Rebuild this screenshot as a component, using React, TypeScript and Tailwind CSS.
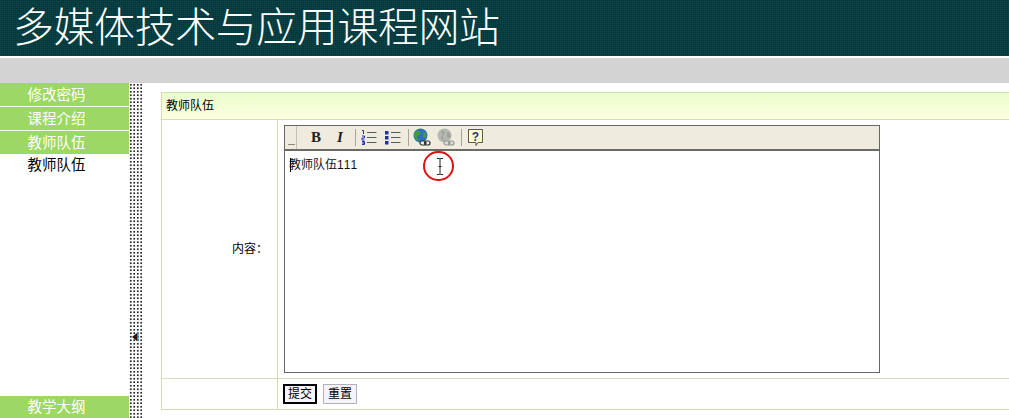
import React from "react";

const font = "font-['Liberation_Sans','Noto_Sans_CJK_SC',sans-serif]";

function Nav({ label }: { label: string }) {
  return (
    <div className="h-[24px] flex items-center justify-center pr-[16px] pt-[2px] text-[14.5px] leading-none text-white bg-[#9dd764] border-b border-b-white">
      {label}
    </div>
  );
}

function Sep() {
  return <div className="w-px h-[17px] bg-[#a8a595] ml-[3px] mr-[1px]" />;
}

function Btn({ children }: { children: React.ReactNode }) {
  return <div className="w-[24px] h-full flex items-center justify-center">{children}</div>;
}

export default function App() {
  return (
    <div className={`w-[1009px] h-[418px] overflow-hidden bg-white flex flex-col ${font}`}>
      <div className="h-[56px] shrink-0 bg-[#0a4144] bg-[conic-gradient(#023034_25%,transparent_0)] bg-[length:2px_2px] pl-[13px] flex items-center">
        <span className="text-white text-[41px] leading-none font-light font-['Liberation_Serif','Noto_Sans_CJK_SC',serif] tracking-[-0.45px]">多媒体技术与应用课程网站</span>
      </div>
      <div className="h-[2px] shrink-0 bg-white" />
      <div className="h-[25px] shrink-0 bg-[#d3d3d3]" />
      <div className="flex flex-1 min-h-0">
        <div className="w-[129px] shrink-0 flex flex-col">
          <Nav label="修改密码" />
          <Nav label="课程介绍" />
          <Nav label="教师队伍" />
          <div className="h-[20px] flex items-center justify-center pr-[16px] text-[14.5px] leading-none text-black bg-white">教师队伍</div>
          <div className="flex-1" />
          <div className="h-[22px] flex items-center justify-center pr-[16px] text-[14.5px] leading-none text-white bg-[#9dd764]">教学大纲</div>
        </div>
        <div className="relative w-[13px] shrink-0 bg-[radial-gradient(circle,#000_0.55px,transparent_1px)] bg-[length:3.5px_3.5px]">
          <svg className="absolute left-[3px] top-[250px]" width="7" height="8" viewBox="0 0 7 8">
            <path d="M5 0 L0 4 L5 8 Z" fill="#2a1408" />
            <rect x="5" y="0" width="1.5" height="8" fill="#3a7fb0" />
          </svg>
        </div>
        <div className="flex-1 min-w-0 pl-[19px] pt-[9px]">
          <div className="w-[900px] h-[318px] flex flex-col border border-[#d6dcb4] border-r-0 text-[12px] text-black">
            <div className="h-[27px] shrink-0 flex items-center pl-[4px] border-b border-[#d6dcb4] bg-gradient-to-b from-[#e9fdcb] to-[#fffee0]">教师队伍</div>
            <div className="flex-1 min-h-0 flex border-b border-[#d6dcb4]">
              <div className="w-[116px] shrink-0 border-r border-[#d6dcb4] flex items-center justify-end pr-[9px]">内容：</div>
              <div className="pl-[6px] pt-[5px]">
                <div className="w-[596px] h-[248px] flex flex-col border border-[#666]">
                  <div className="h-[25px] shrink-0 flex items-center bg-[#efecdf] border-b-2 border-b-[#6d6b66]">
                    <div className="w-[12px] h-full flex items-end pb-[3px] pl-[3px] border-r border-r-[#c4c1b0]"><div className="w-[7px] h-[2px] border-t border-t-[#8a8a80]" /></div>
                    <div className="w-[7px]" />
                    <Btn><span className="font-['Liberation_Serif',serif] font-bold text-[15px] leading-none text-[#222]">B</span></Btn>
                    <Btn><span className="font-['Liberation_Serif',serif] font-bold italic text-[15px] leading-none text-[#222]">I</span></Btn>
                    <Sep />
                    <Btn>
                      <svg width="16" height="15" viewBox="0 0 16 15">
                        <path d="M1 .500h1.500v3.500M1 6h2.500v2H1v2h2.500M1 11.500h2.500v1.500H1.500h2v1.500H1" stroke="#2233aa" fill="none" strokeWidth="1" />
                        <path d="M6 2.500h9.500M6 7.500h9.500M6 12.500h9.500" stroke="#555c50" strokeWidth="1.200" />
                      </svg>
                    </Btn>
                    <Btn>
                      <svg width="16" height="15" viewBox="0 0 16 15">
                        <path d="M0 1h3.500v3.500H0zM0 6h3.500v3.500H0zM0 11h3.500v3.500H0z" fill="#223399" />
                        <path d="M6 2.500h9.500M6 7.500h9.500M6 12.500h9.500" stroke="#555c50" strokeWidth="1.200" />
                      </svg>
                    </Btn>
                    <Sep />
                    <Btn>
                      <svg width="18" height="19" viewBox="0 0 18 19">
                        <circle cx="7.500" cy="7.500" r="7" fill="#2f6fbf" />
                        <path d="M4 2.500c2 0 4 1 3.500 3S4 7 4 9s2 3 3 4c-3 0-6-2.500-6-6 0-2 1.500-4 3-4.500zM10 4l3 1 .5 4-3 1z" fill="#3f9f3a" />
                        <path d="M7 15a2 2 0 0 1 2-2h2a2 2 0 0 1 0 4H9a2 2 0 0 1-2-2zM11.500 15a2 2 0 0 1 2-2h1.500a2 2 0 0 1 0 4h-1.500a2 2 0 0 1-2-2z" fill="#eee" stroke="#333" strokeWidth="1.200" />
                      </svg>
                    </Btn>
                    <Btn>
                      <svg width="18" height="19" viewBox="0 0 18 19">
                        <circle cx="7.500" cy="7.500" r="7" fill="#b8b8b2" />
                        <path d="M4 2.500c2 0 4 1 3.500 3S4 7 4 9s2 3 3 4M10 4l3 1 .5 4-3 1z" fill="#a0a09a" />
                        <path d="M7 15a2 2 0 0 1 2-2h2a2 2 0 0 1 0 4H9a2 2 0 0 1-2-2zM11.500 15a2 2 0 0 1 2-2h1.500a2 2 0 0 1 0 4h-1.500a2 2 0 0 1-2-2z" fill="#ddd" stroke="#9a9a94" strokeWidth="1.200" />
                      </svg>
                    </Btn>
                    <Sep />
                    <Btn>
                      <svg width="17" height="19" viewBox="0 0 17 19">
                        <path d="M1.500 1.500h14v13H11l-2 3v-3H1.500z" fill="#fffbd0" stroke="#57574a" strokeWidth="1" />
                        <text x="8.500" y="12.500" fontSize="12" fontWeight="700" textAnchor="middle" fill="#1a3a70" fontFamily="Liberation Sans">?</text>
                      </svg>
                    </Btn>
                  </div>
                  <div className="relative flex-1 bg-white pl-[4px] pt-[8px] text-[12px] leading-none">
                    <span className="text-[#111]">教师队伍<span className="tracking-[1px]">111</span></span>
                    <div className="absolute left-[5px] top-[7px] w-px h-[14px] bg-black" />
                    <div className="absolute left-[138px] top-0 w-[31px] h-[30px] rounded-full border-2 border-[#e01010] flex items-center justify-center pl-[3px]">
                      <svg width="8" height="17" viewBox="0 0 8 17"><path d="M1 .500h2.500l.5.500.5-.500H7M4 1v15M1 16.500h2.500l.5-.500.5.500H7M2.500 8.500h3" stroke="#222" fill="none" strokeWidth="1" /></svg>
                    </div>
                  </div>
                </div>
              </div>
            </div>
            <div className="h-[30px] shrink-0 flex">
              <div className="w-[116px] shrink-0 border-r border-[#d6dcb4]" />
              <div className="pl-[5px] pt-[5px] flex gap-[6px] items-start">
                <button className="h-[20px] w-[34px] flex items-center justify-center bg-[#f7f3fa] border-2 border-black text-[12px] leading-none">提交</button>
                <button className="h-[20px] w-[34px] flex items-center justify-center bg-[#f7f3fa] border border-[#b4b0b8] text-[12px] leading-none">重置</button>
              </div>
            </div>
          </div>
        </div>
      </div>
    </div>
  );
}
